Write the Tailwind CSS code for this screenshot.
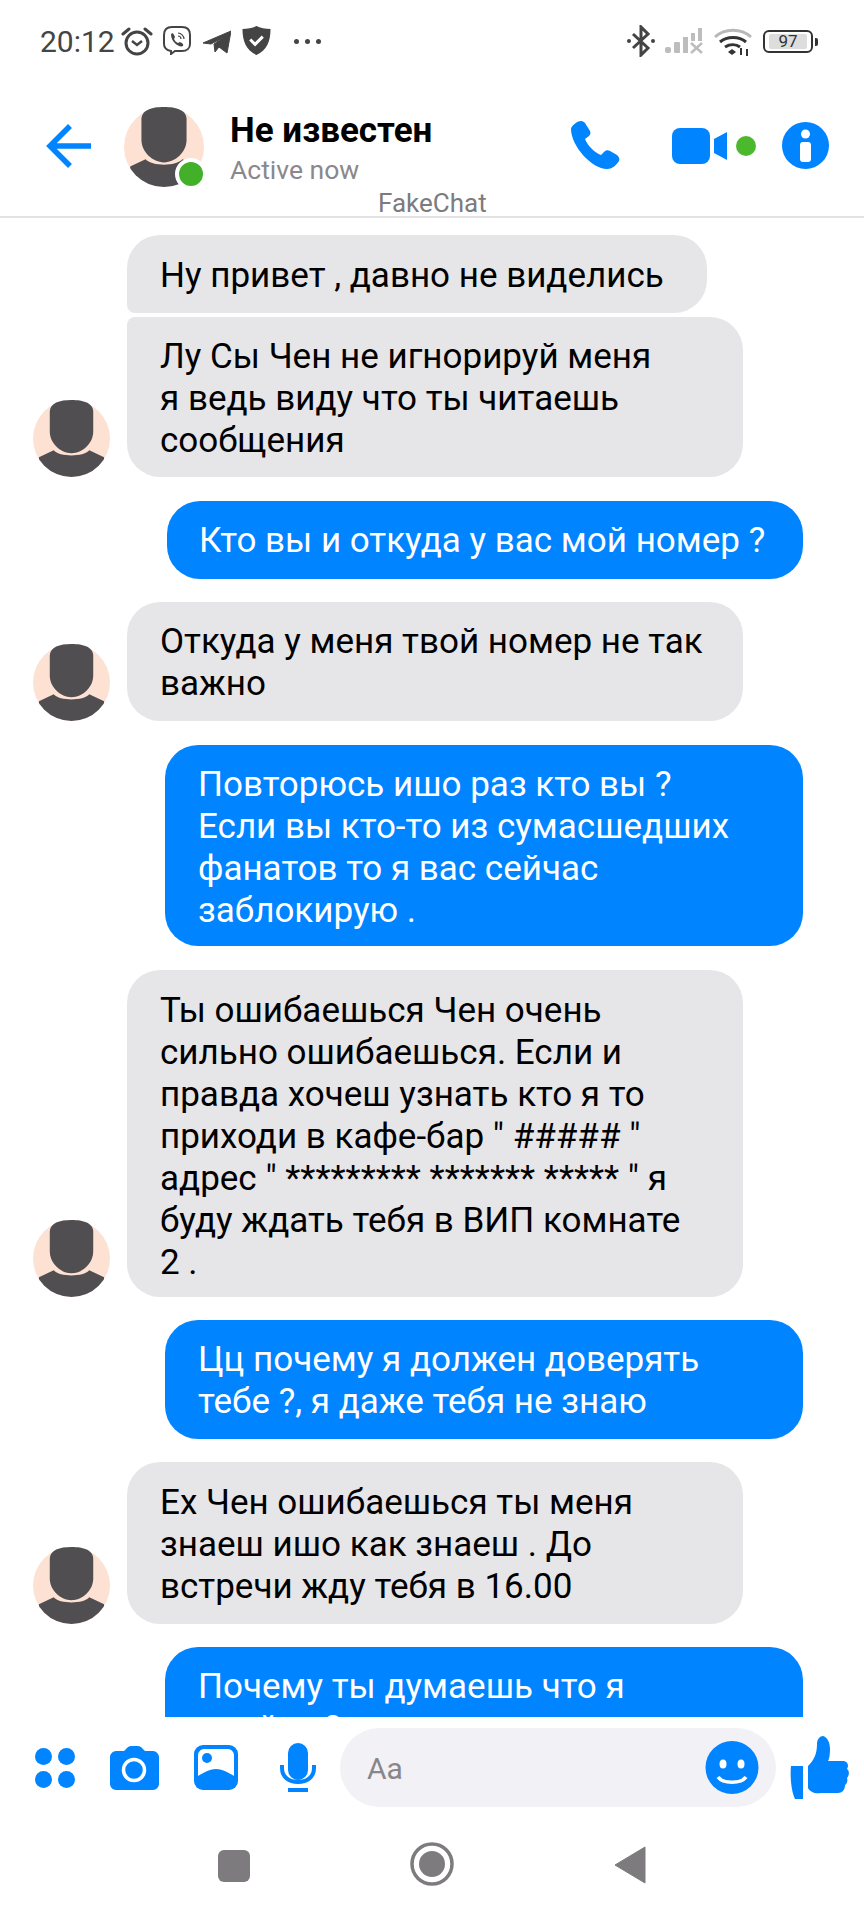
<!DOCTYPE html>
<html lang="ru"><head><meta charset="utf-8">
<script src="https://cdn.jsdelivr.net/npm/@tailwindcss/browser@4"></script>
</head>
<body class="bg-white">
<div class="relative w-[864px] h-[1920px] bg-white overflow-hidden flex flex-col font-['Roboto',sans-serif]">
  <!-- status bar -->
  <div class="h-[84px] shrink-0 flex items-start pl-[40px] pr-[46px] pt-[25px] text-[#444444]">
    <span class="text-[30px] leading-[34px] w-[74px]">20:12</span>
    <svg class="ml-[7px] mt-[1px]" width="32" height="30" viewBox="0 0 32 30" fill="none" stroke="#444" stroke-width="3"><circle cx="16" cy="17" r="11"/><path d="M11 15l5 4 5-4" stroke-width="2.500"/><path d="M2 8l6-5M30 8l-6-5" stroke-linecap="round"/></svg>
    <svg class="ml-[9px]" width="30" height="30" viewBox="0 0 30 30" fill="none" stroke="#444" stroke-width="2"><path d="M9 26v3l4-3h7c5 0 8-3 8-7v-9c0-5-3-8-8-8h-10c-5 0-8 3-8 8v9c0 3 2 6 7 7z"/><path d="M9 9c2-2 3 1 4 3l-1 2c1 2 2 3 4 4l2-1c2 1 4 2 3 4-3 2-12-3-12-12z" fill="#444" stroke="none"/><path d="M16 8c3 0 6 3 6 6M16 11c2 0 3 1 3 3" stroke-width="1.200"/></svg>
    <svg class="ml-[11px] mt-[5px]" width="28" height="24" viewBox="0 0 28 24" fill="#444"><path d="M0 13L28 1 24 23 16 17 12 22 11 14 21 7 8 14z" stroke="#444" stroke-linejoin="round"/></svg>
    <svg class="ml-[11px] mt-[1px]" width="29" height="29" viewBox="0 0 29 30"><path d="M14.500 0C18 2 24 3 29 3 29 16 25 25 14.500 30 4 25 0 16 0 3 5 3 11 2 14.500 0z" fill="#444"/><path d="M8 14l5 5 8-8" fill="none" stroke="#fff" stroke-width="3"/></svg>
    <div class="ml-[23px] mt-[14px] flex gap-[6px]"><span class="w-[5px] h-[5px] rounded-full bg-[#444444]"></span><span class="w-[5px] h-[5px] rounded-full bg-[#444444]"></span><span class="w-[5px] h-[5px] rounded-full bg-[#444444]"></span></div>
    <div class="flex-1"></div>
    <svg width="28" height="32" viewBox="0 0 28 32" fill="none" stroke="#444" stroke-width="3"><path d="M6 9l15 14-7 7V2l7 7-15 14"/><circle cx="2" cy="16" r="2" fill="#444" stroke="none"/><circle cx="26" cy="16" r="2" fill="#444" stroke="none"/></svg>
    <svg class="ml-[10px] mt-[3px]" width="39" height="26" viewBox="0 0 39 26" fill="#bdbdbd"><rect x="0" y="19" width="6" height="6" rx="2"/><rect x="9" y="14" width="6" height="11" rx="1"/><rect x="18" y="9" width="5" height="16"/><rect x="26" y="5" width="4" height="8"/><rect x="33" y="0" width="4" height="13"/><path d="M26 15l11 10M37 15L26 25" stroke="#bdbdbd" stroke-width="2.500"/></svg>
    <svg class="ml-[10px] mt-[3px]" width="38" height="28" viewBox="0 0 38 28" fill="none"><path d="M1 9c10-9 26-9 36 0" stroke="#b8b8b8" stroke-width="3"/><path d="M6 14c7-6 19-6 26 0" stroke="#333" stroke-width="3"/><path d="M11 19c5-3 11-3 15 0" stroke="#333" stroke-width="3"/><path d="M14 24l4-3 4 3-4 3z" fill="#333"/><path d="M27 27v-7M33 21v7" stroke="#333" stroke-width="2"/></svg>
    <div class="ml-[11px] mt-[5px] flex items-center">
      <div class="w-[50px] h-[23px] border-[2px] border-[#333333] rounded-[6px] py-[2px] px-[4px] flex"><div class="w-full bg-[#dddddd] rounded-[2px] flex items-center justify-center text-[17px] leading-none text-[#333333]">97</div></div>
      <div class="w-[3px] h-[8px] bg-[#333333] ml-[2px] rounded-r-[2px]"></div>
    </div>
  </div>
  <!-- header -->
  <div class="relative h-[134px] shrink-0 border-b-[2px] border-[#e2e2e4] flex items-start">
    <svg class="ml-[46px] mt-[40px]" width="46" height="44" viewBox="0 0 46 44" fill="none" stroke="#0084ff" stroke-width="5.500"><path d="M45 22H4M24 2L4 22l20 20"/></svg>
    <div class="relative ml-[32px] mt-[23px] w-[80px] h-[80px]">
      <svg width="80" height="80" viewBox="0 0 78 78"><defs><clipPath id="c0"><circle cx="39" cy="39" r="39"/></clipPath></defs><circle cx="39" cy="39" r="39" fill="#fde1d3"/><path d="M17 12C17 3 27 0 39 0s22 3 22 12v20c0 12-11 22-22 22S17 44 17 32z" fill="#504e50"/><path clip-path="url(#c0)" d="M6 58l15-7c6 7 30 7 36 0l15 7v20H6z" fill="#504e50"/></svg>
      <span class="absolute right-[-3px] bottom-[-3px] w-[32px] h-[32px] rounded-full bg-[#43b02a] border-[4px] border-white"></span>
    </div>
    <div class="ml-[26px] mt-[26px]">
      <div class="text-[35px] leading-[42px] font-bold text-black">Не известен</div>
      <div class="text-[26.500px] leading-[30px] mt-[3px] text-[#8a888c]">Active now</div>
    </div>
    <div class="flex-1"></div>
    <svg class="mt-[36px]" width="50" height="50" viewBox="0 0 50 50" fill="#0084ff"><path d="M1 9c0-3 6-8 10-8 2 0 3 1 4 2l5 8c1 2 0 4-1 5l-4 3c2 6 10 14 16 16l3-3c2-2 4-2 6-1l7 4c2 2 3 4 2 6-2 3-6 8-12 8C22 49 1 26 1 9z"/></svg>
    <svg class="ml-[52px] mt-[44px]" width="55" height="36" viewBox="0 0 55 36" fill="#0084ff"><rect width="38" height="36" rx="8"/><path d="M42 11l13-7v28l-13-7z"/></svg>
    <span class="ml-[9px] mt-[52px] w-[20px] h-[20px] rounded-full bg-[#4cb82e]"></span>
    <svg class="ml-[26px] mr-[35px] mt-[38px]" width="47" height="47" viewBox="0 0 47 47"><circle cx="23.500" cy="23.500" r="23.500" fill="#0084ff"/><circle cx="23.500" cy="12" r="4.500" fill="#fff"/><rect x="18" y="20" width="11" height="20" rx="3" fill="#fff"/></svg>
    <span class="absolute left-[378px] top-[104px] text-[26px] leading-[30px] text-[#7d7b7e]">FakeChat</span>
  </div>
  <!-- messages -->
  <div class="flex-1 min-h-0 overflow-hidden relative pt-[17px] text-[35px] leading-[42px]">
    <div class="ml-[127px] w-[580px] h-[78px] rounded-t-[33px] rounded-br-[33px] rounded-bl-[8px] bg-[#e6e5e8] text-black pl-[33px] pt-[20px]">Ну привет , давно не виделись</div>
    <div class="mt-[4px] flex items-end">
      <svg class="ml-[33px] mr-[17px]" width="77" height="77" viewBox="0 0 78 78"><defs><clipPath id="c1"><circle cx="39" cy="39" r="39"/></clipPath></defs><circle cx="39" cy="39" r="39" fill="#fde1d3"/><path d="M17 12C17 3 27 0 39 0s22 3 22 12v20c0 12-11 22-22 22S17 44 17 32z" fill="#504e50"/><path clip-path="url(#c1)" d="M6 58l15-7c6 7 30 7 36 0l15 7v20H6z" fill="#504e50"/></svg>
      <div class="w-[616px] h-[160px] rounded-b-[33px] rounded-tr-[33px] rounded-tl-[8px] bg-[#e6e5e8] text-black pl-[33px] pt-[19px]">Лу Сы Чен не игнорируй меня<br>я ведь виду что ты читаешь<br>сообщения</div>
    </div>
    <div class="mt-[24px] ml-[167px] w-[636px] h-[78px] rounded-[33px] bg-[#0084ff] text-white pl-[32px] pt-[19px]">Кто вы и откуда у вас мой номер ?</div>
    <div class="mt-[23px] flex items-end">
      <svg class="ml-[33px] mr-[17px]" width="77" height="77" viewBox="0 0 78 78"><defs><clipPath id="c2"><circle cx="39" cy="39" r="39"/></clipPath></defs><circle cx="39" cy="39" r="39" fill="#fde1d3"/><path d="M17 12C17 3 27 0 39 0s22 3 22 12v20c0 12-11 22-22 22S17 44 17 32z" fill="#504e50"/><path clip-path="url(#c2)" d="M6 58l15-7c6 7 30 7 36 0l15 7v20H6z" fill="#504e50"/></svg>
      <div class="w-[616px] h-[119px] rounded-[33px] bg-[#e6e5e8] text-black pl-[33px] pt-[19px]">Откуда у меня твой номер не так<br>важно</div>
    </div>
    <div class="mt-[24px] ml-[165px] w-[638px] h-[201px] rounded-[33px] bg-[#0084ff] text-white pl-[33px] pt-[19px]">Повторюсь ишо раз кто вы ?<br>Если вы кто-то из сумасшедших<br>фанатов то я вас сейчас<br>заблокирую .</div>
    <div class="mt-[24px] flex items-end">
      <svg class="ml-[33px] mr-[17px]" width="77" height="77" viewBox="0 0 78 78"><defs><clipPath id="c3"><circle cx="39" cy="39" r="39"/></clipPath></defs><circle cx="39" cy="39" r="39" fill="#fde1d3"/><path d="M17 12C17 3 27 0 39 0s22 3 22 12v20c0 12-11 22-22 22S17 44 17 32z" fill="#504e50"/><path clip-path="url(#c3)" d="M6 58l15-7c6 7 30 7 36 0l15 7v20H6z" fill="#504e50"/></svg>
      <div class="w-[616px] h-[327px] rounded-[33px] bg-[#e6e5e8] text-black pl-[33px] pt-[20px]">Ты ошибаешься Чен очень<br>сильно ошибаешься. Если и<br>правда хочеш узнать кто я то<br>приходи в кафе-бар " ##### "<br>адрес " ********* ******* ***** " я<br>буду ждать тебя в ВИП комнате<br>2 .</div>
    </div>
    <div class="mt-[23px] ml-[165px] w-[638px] h-[119px] rounded-[33px] bg-[#0084ff] text-white pl-[33px] pt-[19px]">Цц почему я должен доверять<br>тебе ?, я даже тебя не знаю</div>
    <div class="mt-[23px] flex items-end">
      <svg class="ml-[33px] mr-[17px]" width="77" height="77" viewBox="0 0 78 78"><defs><clipPath id="c4"><circle cx="39" cy="39" r="39"/></clipPath></defs><circle cx="39" cy="39" r="39" fill="#fde1d3"/><path d="M17 12C17 3 27 0 39 0s22 3 22 12v20c0 12-11 22-22 22S17 44 17 32z" fill="#504e50"/><path clip-path="url(#c4)" d="M6 58l15-7c6 7 30 7 36 0l15 7v20H6z" fill="#504e50"/></svg>
      <div class="w-[616px] h-[162px] rounded-[33px] bg-[#e6e5e8] text-black pl-[33px] pt-[20px]">Ех Чен ошибаешься ты меня<br>знаеш ишо как знаеш . До<br>встречи жду тебя в 16.00</div>
    </div>
    <div class="mt-[23px] ml-[165px] w-[638px] h-[119px] rounded-t-[33px] bg-[#0084ff] text-white pl-[33px] pt-[19px]">Почему ты думаешь что я<br>прийду ?</div>
  </div>
  <!-- composer -->
  <div class="h-[93px] shrink-0 flex items-start bg-white">
    <svg class="ml-[35px] mt-[31px]" width="40" height="40" viewBox="0 0 40 40" fill="#0084ff"><circle cx="8.500" cy="8.500" r="8.500"/><circle cx="31.500" cy="8.500" r="8.500"/><circle cx="8.500" cy="31.500" r="8.500"/><circle cx="31.500" cy="31.500" r="8.500"/></svg>
    <svg class="ml-[35px] mt-[29px]" width="49" height="44" viewBox="0 0 49 44"><path d="M6 5h8l3-3c1-1 2-2 4-2h7c2 0 3 1 4 2l3 3h8c3 0 6 3 6 6v27c0 3-3 6-6 6H6c-3 0-6-3-6-6V11c0-3 3-6 6-6z" fill="#0084ff"/><circle cx="24" cy="24" r="10.500" fill="none" stroke="#fff" stroke-width="3.500"/></svg>
    <svg class="ml-[35px] mt-[28px]" width="44" height="45" viewBox="0 0 44 45"><rect width="44" height="45" rx="9" fill="#0084ff"/><path d="M4 10c0-3 3-6 6-6h24c3 0 6 3 6 6v21c-5-3-11-7-18-7S9 28 4 31z" fill="#fff"/><circle cx="13" cy="13" r="5" fill="#0084ff"/></svg>
    <svg class="ml-[42px] mt-[26px]" width="36" height="49" viewBox="0 0 36 49" fill="none"><rect x="8" y="0" width="20" height="37" rx="10" fill="#0084ff"/><path d="M2 22v3c0 9 7 14 16 14s16-5 16-14v-3" stroke="#0084ff" stroke-width="4"/><rect x="8" y="45" width="20" height="4" fill="#0084ff"/></svg>
    <div class="ml-[24px] mt-[11px] w-[436px] h-[79px] rounded-full bg-[#f2f2f6] flex items-center pl-[27px] pr-[17px]">
      <span class="text-[30px] leading-[36px] mt-[3px] text-[#88868a]">Aa</span>
      <div class="flex-1"></div>
      <svg width="54" height="53" viewBox="0 0 54 53"><circle cx="27" cy="26.500" r="26.500" fill="#0084ff"/><ellipse cx="18" cy="23" rx="3.500" ry="4.500" fill="#fff"/><ellipse cx="36" cy="23" rx="3.500" ry="4.500" fill="#fff"/><path d="M13 36c5 7 23 7 28 0" fill="none" stroke="#fff" stroke-width="3.500"/></svg>
    </div>
    <svg class="ml-[14px] mt-[19px]" width="62" height="63" viewBox="0 0 62 63" fill="#0084ff"><path d="M1 30h12v33H5c-4-8-5-24-4-33z"/><path d="M18 30c6-6 9-12 9-22 0-5 3-8 6-8 4 1 7 6 7 13 0 6-1 11-2 12h16c4 1 5 5 3 8 3 2 2 7 0 9 1 2 0 6-2 7 0 5-3 8-7 8H31c-6 1-11-1-13-5z"/></svg>
  </div>
  <!-- nav -->
  <div class="h-[110px] shrink-0 relative flex items-start">
    <span class="ml-[218px] mt-[40px] w-[32px] h-[32px] rounded-[6px] bg-[#7d7b7e]"></span>
    <svg class="ml-[160px] mt-[32px]" width="44" height="44" viewBox="0 0 44 44"><circle cx="22" cy="22" r="20" fill="none" stroke="#7d7b7e" stroke-width="3.500"/><circle cx="22" cy="22" r="13" fill="#7d7b7e"/></svg>
    <svg class="ml-[160px] mt-[36px]" width="32" height="38" viewBox="0 0 32 38"><path d="M31 1v36L1 19z" fill="#7d7b7e" stroke="#7d7b7e" stroke-linejoin="round"/></svg>
  </div>
</div>
</body></html>
